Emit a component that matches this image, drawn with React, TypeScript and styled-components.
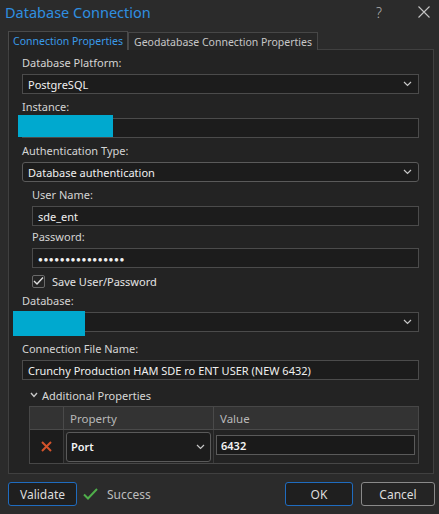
import React from "react";
import styled, { createGlobalStyle, css } from "styled-components";

const GlobalStyle = createGlobalStyle`
  html, body {
    margin: 0;
    padding: 0;
    background: #2b2b2b;
  }
  body {
    font-family: "Noto Sans", "Open Sans", sans-serif;
    font-size: 11px;
    color: #e4e4e4;
  }
  * { box-sizing: border-box; }
`;

const Chevron = () => (
  <svg width="9" height="6" viewBox="0 0 9 6">
    <path d="M1 1 L4.5 4.5 L8 1" fill="none" stroke="#c8c8c8" strokeWidth="1.2" />
  </svg>
);

const App = () => {
  return (
    <Window>
      <GlobalStyle />
      <TitleBar>
        <Title>Database Connection</Title>
        <TitleActions>
          <HelpGlyph>?</HelpGlyph>
          <svg width="12" height="12" viewBox="0 0 12 12">
            <path d="M0.5 0.5 L11.5 11.5 M11.5 0.5 L0.5 11.5" stroke="#c4c4c4" strokeWidth="1.1" />
          </svg>
        </TitleActions>
      </TitleBar>

      <TabRow>
        <Tab active>Connection Properties</Tab>
        <Tab>Geodatabase Connection Properties</Tab>
      </TabRow>

      <Panel>
        <Field>
          <Label>Database Platform:</Label>
          <Select>
            <span>PostgreSQL</span>
            <Chevron />
          </Select>
        </Field>

        <Field>
          <Label>Instance:</Label>
          <Redacted>
            <Input />
            <Mask style={{ left: -4, top: -3, width: 95, height: 22 }} />
          </Redacted>
        </Field>

        <Field>
          <Label>Authentication Type:</Label>
          <Select rounded>
            <span>Database authentication</span>
            <Chevron />
          </Select>
        </Field>

        <Indented>
          <Field>
            <Label>User Name:</Label>
            <Input>sde_ent</Input>
          </Field>
          <Field>
            <Label>Password:</Label>
            <Input>
              <Dots>●●●●●●●●●●●●●●●●</Dots>
            </Input>
          </Field>
          <CheckRow>
            <CheckBox>
              <svg width="11" height="10" viewBox="0 0 11 10">
                <path d="M1 5 L4 8 L10 1.5" fill="none" stroke="#e0e0e0" strokeWidth="1.4" />
              </svg>
            </CheckBox>
            <span>Save User/Password</span>
          </CheckRow>
        </Indented>

        <Field>
          <Label>Database:</Label>
          <Redacted>
            <Select>
              <span />
              <Chevron />
            </Select>
            <Mask style={{ left: -9, top: -1, width: 72, height: 25 }} />
          </Redacted>
        </Field>

        <Field spaced>
          <Label>Connection File Name:</Label>
          <Input>Crunchy Production HAM SDE ro ENT USER (NEW 6432)</Input>
        </Field>

        <Expander>
          <svg width="8" height="6" viewBox="0 0 8 6">
            <path d="M1 1 L4 4.5 L7 1" fill="none" stroke="#c8c8c8" strokeWidth="1.4" />
          </svg>
          <span>Additional Properties</span>
        </Expander>

        <PropTable>
          <HeadCell />
          <HeadCell>Property</HeadCell>
          <HeadCell>Value</HeadCell>
          <DeleteCell>
            <svg width="11" height="11" viewBox="0 0 11 11">
              <path d="M1 1 L10 10 M10 1 L1 10" stroke="#d4532b" strokeWidth="2" />
            </svg>
          </DeleteCell>
          <BodyCell>
            <CellSelect>
              <span>Port</span>
              <Chevron />
            </CellSelect>
          </BodyCell>
          <BodyCell>
            <CellInput>6432</CellInput>
          </BodyCell>
        </PropTable>
      </Panel>

      <Footer>
        <Button primary width={69}>Validate</Button>
        <Status>
          <svg width="15" height="12" viewBox="0 0 15 12">
            <path d="M1 6.5 L5 10.5 L14 1" fill="none" stroke="#4fae4a" strokeWidth="2" />
          </svg>
          <span>Success</span>
        </Status>
        <Spacer />
        <Button primary width={68}>OK</Button>
        <Button width={74}>Cancel</Button>
      </Footer>
    </Window>
  );
};

export default App;

const Window = styled.div`
  width: 439px;
  height: 514px;
  display: flex;
  flex-direction: column;
  background: #2b2b2b;
`;

const TitleBar = styled.div`
  height: 24px;
  display: flex;
  align-items: center;
  justify-content: space-between;
  padding: 0 9px 0 5px;
`;

const Title = styled.div`
  font-size: 14.5px;
  color: #2f8fe0;
`;

const TitleActions = styled.div`
  display: flex;
  align-items: center;
  gap: 36px;
`;

const HelpGlyph = styled.span`
  font-size: 14px;
  color: #b0b0b0;
  font-weight: 300;
`;

const TabRow = styled.div`
  display: flex;
  align-items: flex-end;
  height: 25px;
  padding-left: 8px;
`;

const Tab = styled.div<{ active?: boolean }>`
  height: 18px;
  padding: 0 5px;
  display: flex;
  align-items: center;
  font-size: 10.5px;
  color: #c8c8c8;
  background: #272727;
  border: 1px solid #474747;
  border-bottom: none;
  margin-bottom: -1px;
  z-index: 1;

  ${(p) =>
    p.active &&
    css`
      height: 19px;
      padding: 0 4px;
      color: #3a9ae8;
      background: #232323;
      border-color: #4a4a4a;
    `}
`;

const Panel = styled.div`
  margin: 0 5px 0 8px;
  height: 425px;
  background: #232323;
  border: 1px solid #404040;
  padding: 5px 14px 0 13px;
  display: flex;
  flex-direction: column;
  gap: 5px;
`;

const Field = styled.div<{ spaced?: boolean }>`
  display: flex;
  flex-direction: column;
  gap: 3px;
  ${(p) =>
    p.spaced &&
    css`
      margin-top: 4px;
    `}
`;

const Label = styled.div`
  height: 16px;
  line-height: 16px;
  color: #d4d4d4;
  font-size: 11px;
`;

const controlBase = css`
  height: 20px;
  background: #1c1c1c;
  border: 1px solid #4b4b4b;
  display: flex;
  align-items: center;
  padding: 0 5px;
  font-size: 11px;
  color: #f0f0f0;
`;

const Select = styled.div<{ rounded?: boolean }>`
  ${controlBase}
  justify-content: space-between;
  padding-right: 6px;
  ${(p) =>
    p.rounded &&
    css`
      border-radius: 3px;
      border-color: #5a5a5a;
    `}
`;

const Input = styled.div`
  ${controlBase}
`;

const Dots = styled.span`
  font-size: 8px;
  letter-spacing: 0.6px;
`;

const Redacted = styled.div`
  position: relative;
`;

const Mask = styled.div`
  position: absolute;
  background: #00a9cf;
`;

const Indented = styled.div`
  display: flex;
  flex-direction: column;
  gap: 3px;
  padding-left: 10px;
`;

const CheckRow = styled.div`
  display: flex;
  align-items: center;
  gap: 7px;
  height: 14px;
  margin-top: 3px;
  color: #e4e4e4;
`;

const CheckBox = styled.div`
  width: 13px;
  height: 13px;
  border: 1px solid #6a6a6a;
  border-radius: 2px;
  display: flex;
  align-items: center;
  justify-content: center;
`;

const Expander = styled.div`
  display: flex;
  align-items: center;
  gap: 4px;
  height: 16px;
  margin-top: 2px;
  padding-left: 8px;
  color: #d8d8d8;
`;

const PropTable = styled.div`
  margin: -2px 0 0 7px;
  display: grid;
  grid-template-columns: 33px 150px 1fr;
  grid-template-rows: 23px 33px;
  border: 1px solid #474747;
  background: #232323;
`;

const HeadCell = styled.div`
  background: #333333;
  border-left: 1px solid #4a4a4a;
  border-bottom: 1px solid #4a4a4a;
  display: flex;
  align-items: center;
  padding-left: 6px;
  color: #b8b8b8;
  font-size: 11.5px;

  &:first-child {
    border-left: none;
  }
`;

const DeleteCell = styled.div`
  background: #1c1c1c;
  display: flex;
  align-items: center;
  justify-content: center;
`;

const BodyCell = styled.div`
  display: flex;
  align-items: center;
  padding: 1px 2px;
  border-left: 1px solid #3a3a3a;
`;

const CellSelect = styled.div`
  flex: 1;
  height: 30px;
  border: 1px solid #5a5a5a;
  border-radius: 3px;
  background: #1c1c1c;
  display: flex;
  align-items: center;
  justify-content: space-between;
  padding: 0 5px 0 4px;
  font-weight: 600;
  color: #f4f4f4;
`;

const CellInput = styled.div`
  flex: 1;
  height: 20px;
  margin: 4px 1px 0 0;
  align-self: flex-start;
  border: 1px solid #5a5a5a;
  background: #1a1a1a;
  display: flex;
  align-items: center;
  padding: 0 4px;
  font-weight: 600;
  color: #f4f4f4;
`;

const Footer = styled.div`
  flex: 1;
  display: flex;
  align-items: center;
  padding: 0 4px 0 8px;
  gap: 8px;
`;

const Button = styled.div<{ primary?: boolean; width: number }>`
  width: ${(p) => p.width}px;
  height: 24px;
  border: 1px solid #8a8a8a;
  border-radius: 3px;
  background: #242424;
  display: flex;
  align-items: center;
  justify-content: center;
  font-size: 12px;
  color: #dcdcdc;

  ${(p) =>
    p.primary &&
    css`
      border-color: #1f6cc0;
      background: #1f1f1f;
    `}
`;

const Status = styled.div`
  display: flex;
  align-items: center;
  gap: 9px;
  margin-left: -2px;
  color: #bdbdbd;
  font-size: 12px;
`;

const Spacer = styled.div`
  flex: 1;
`;
